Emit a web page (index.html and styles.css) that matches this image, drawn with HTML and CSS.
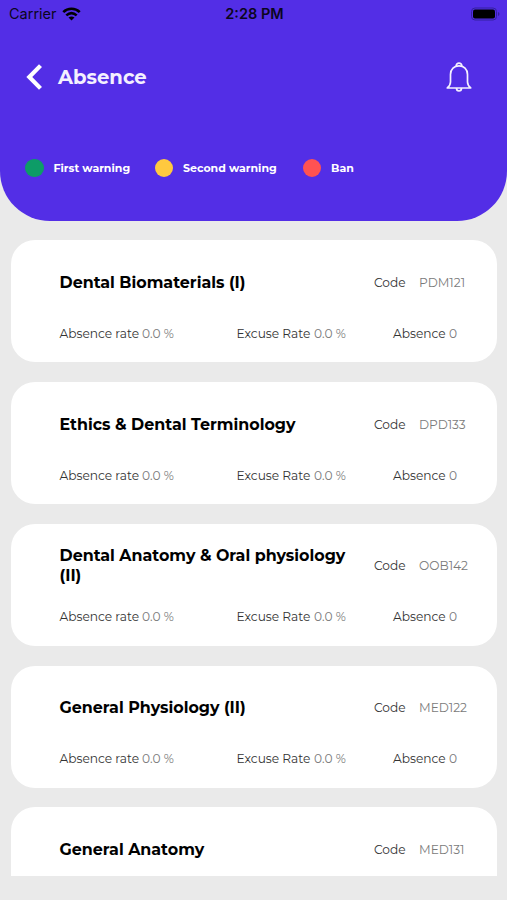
FILE: index.html
```html
<!DOCTYPE html>
<html lang="en">
<head>
<meta charset="UTF-8">
<meta name="viewport" content="width=device-width, initial-scale=1.0">
<title>Absence</title>
<link rel="stylesheet" href="styles.css">
</head>
<body>
<header class="header">
  <div class="status-bar">
    <div class="carrier">
      <span>Carrier</span>
      <svg class="wifi" width="19" height="14" viewBox="0 0 18 14" fill="none" stroke="#000" stroke-width="2.6">
        <path d="M.8 5.100C5.200.600 12.800.600 17.200 5.100"/>
        <path d="M3.800 8.400C7 5.500 11 5.500 14.200 8.400"/>
        <path d="M6 10.600C8 9 10 9 12 10.600L9 13.600Z" fill="#000" stroke="none"/>
      </svg>
    </div>
    <div class="time">2:28 PM</div>
    <svg class="battery" width="30" height="14" viewBox="0 0 30 14">
      <rect x="1.500" y="1" width="25" height="12" rx="3.500" fill="none" stroke="#3520a0"/>
      <rect x="3" y="2.500" width="22" height="9" rx="2" fill="#000"/>
      <path d="M28 5V9Q29.500 8.500 29.500 7T28 5Z" fill="#3520a0"/>
    </svg>
  </div>
  <div class="nav">
    <svg class="back" width="16" height="26" viewBox="0 0 16 26" fill="none" stroke="#fff" stroke-width="4.200">
      <path d="M14.500 1.600L3.300 13L14.500 24.400"/>
    </svg>
    <h1>Absence</h1>
    <svg class="bell" width="26" height="30" viewBox="0 0 26 30" fill="none" stroke="#f4f0ff" stroke-width="1.700" stroke-linejoin="round">
      <path d="M10.300 4.200C9.800 0 16.200 0 15.700 4.200"/>
      <path d="M4.500 20V12.500C4.500 7 8.300 3.900 13 3.900S21.500 7 21.500 12.500V20Q21.600 23.500 24.700 26H1.300Q4.400 23.500 4.500 20Z"/>
      <path d="M10.500 26C10.500 30 15.500 30 15.500 26"/>
    </svg>
  </div>
  <div class="legend">
    <div class="legend-item"><span class="dot green"></span><span class="first">First warning</span></div>
    <div class="legend-item"><span class="dot yellow"></span><span class="second">Second warning</span></div>
    <div class="legend-item"><span class="dot red"></span><span>Ban</span></div>
  </div>
</header>
<main class="list">
  <div class="card">
    <div class="card-top">
      <h2>Dental Biomaterials (I)</h2>
      <span class="label">Code</span><span class="value">PDM121</span>
    </div>
    <div class="card-rates">
      <span class="label">Absence rate</span><span class="value">0.0 %</span>
      <span class="label">Excuse Rate</span><span class="value">0.0 %</span>
      <span class="label">Absence</span><span class="value">0</span>
    </div>
  </div>
  <div class="card">
    <div class="card-top">
      <h2>Ethics &amp; Dental Terminology</h2>
      <span class="label">Code</span><span class="value">DPD133</span>
    </div>
    <div class="card-rates">
      <span class="label">Absence rate</span><span class="value">0.0 %</span>
      <span class="label">Excuse Rate</span><span class="value">0.0 %</span>
      <span class="label">Absence</span><span class="value">0</span>
    </div>
  </div>
  <div class="card">
    <div class="card-top">
      <h2>Dental Anatomy &amp; Oral physiology (II)</h2>
      <span class="label">Code</span><span class="value">OOB142</span>
    </div>
    <div class="card-rates">
      <span class="label">Absence rate</span><span class="value">0.0 %</span>
      <span class="label">Excuse Rate</span><span class="value">0.0 %</span>
      <span class="label">Absence</span><span class="value">0</span>
    </div>
  </div>
  <div class="card">
    <div class="card-top">
      <h2>General Physiology (II)</h2>
      <span class="label">Code</span><span class="value">MED122</span>
    </div>
    <div class="card-rates">
      <span class="label">Absence rate</span><span class="value">0.0 %</span>
      <span class="label">Excuse Rate</span><span class="value">0.0 %</span>
      <span class="label">Absence</span><span class="value">0</span>
    </div>
  </div>
  <div class="card">
    <div class="card-top">
      <h2>General Anatomy</h2>
      <span class="label">Code</span><span class="value">MED131</span>
    </div>
  </div>
</main>
</body>
</html>
```
FILE: styles.css
```css
* {
  box-sizing: border-box;
}

body {
  margin: 0;
  height: 900px;
  overflow: hidden;
  background-color: #eaeaea;
  font-family: Montserrat, Inter, sans-serif;
}

h1, h2 {
  margin: 0;
}

/* Header */
.header {
  height: 220.5px;
  background-color: #532ee6;
  border-radius: 0 0 50px 50px;
}

.status-bar {
  display: grid;
  grid-template-columns: 1fr auto 1fr;
  align-items: center;
  height: 27px;
  padding: 0 7px 0 9px;
  font-family: Inter, sans-serif;
  font-size: 14.5px;
  color: #0b0620;
}

.carrier {
  display: flex;
  align-items: center;
  gap: 5px;
}

.time {
  font-weight: 600;
}

.battery {
  justify-self: end;
}

.nav {
  display: flex;
  align-items: center;
  height: 99px;
  padding: 0 35px 0 26px;
}

.nav h1 {
  margin-left: 16px;
  font-size: 19.6px;
  font-weight: 700;
  color: #f4f0ff;
}

.bell {
  margin-left: auto;
}

.legend {
  display: flex;
  height: 84px;
  padding-left: 25px;
  align-items: center;
  font-size: 11px;
  font-weight: 700;
  color: #fff;
}

.legend-item {
  display: flex;
  align-items: center;
  gap: 10px;
}

.legend-item .first {
  width: 101px;
}

.legend-item .second {
  width: 119.5px;
}

.dot {
  width: 18.5px;
  height: 18.5px;
  border-radius: 50%;
}

.green {
  background-color: #0d9c67;
}

.yellow {
  background-color: #ffc93f;
}

.red {
  background-color: #ff5252;
}

/* Course list */
.list {
  display: flex;
  flex-direction: column;
  gap: 19.75px;
  height: 655.5px;
  padding: 19.9px 10px 0 11px;
  overflow: hidden;
}

.card {
  flex: none;
  height: 122px;
  padding: 17.5px 0 0 48.5px;
  background-color: #fff;
  border-radius: 24px;
}

.card-top {
  display: grid;
  grid-template-columns: 314.5px 45px 1fr;
  align-items: center;
  height: 50px;
}

.card-top h2 {
  padding-right: 20px;
  font-size: 15.9px;
  line-height: 20px;
  font-weight: 700;
}

.card-rates {
  display: grid;
  grid-template-columns: 82.5px 94.5px 77.5px 79px 56px 1fr;
  align-items: center;
  height: 52px;
}

.label,
.value {
  font-size: 12.2px;
  line-height: 16px;
  white-space: nowrap;
}

.label {
  color: #333;
}

.value {
  color: #7a7a7a;
}
```
